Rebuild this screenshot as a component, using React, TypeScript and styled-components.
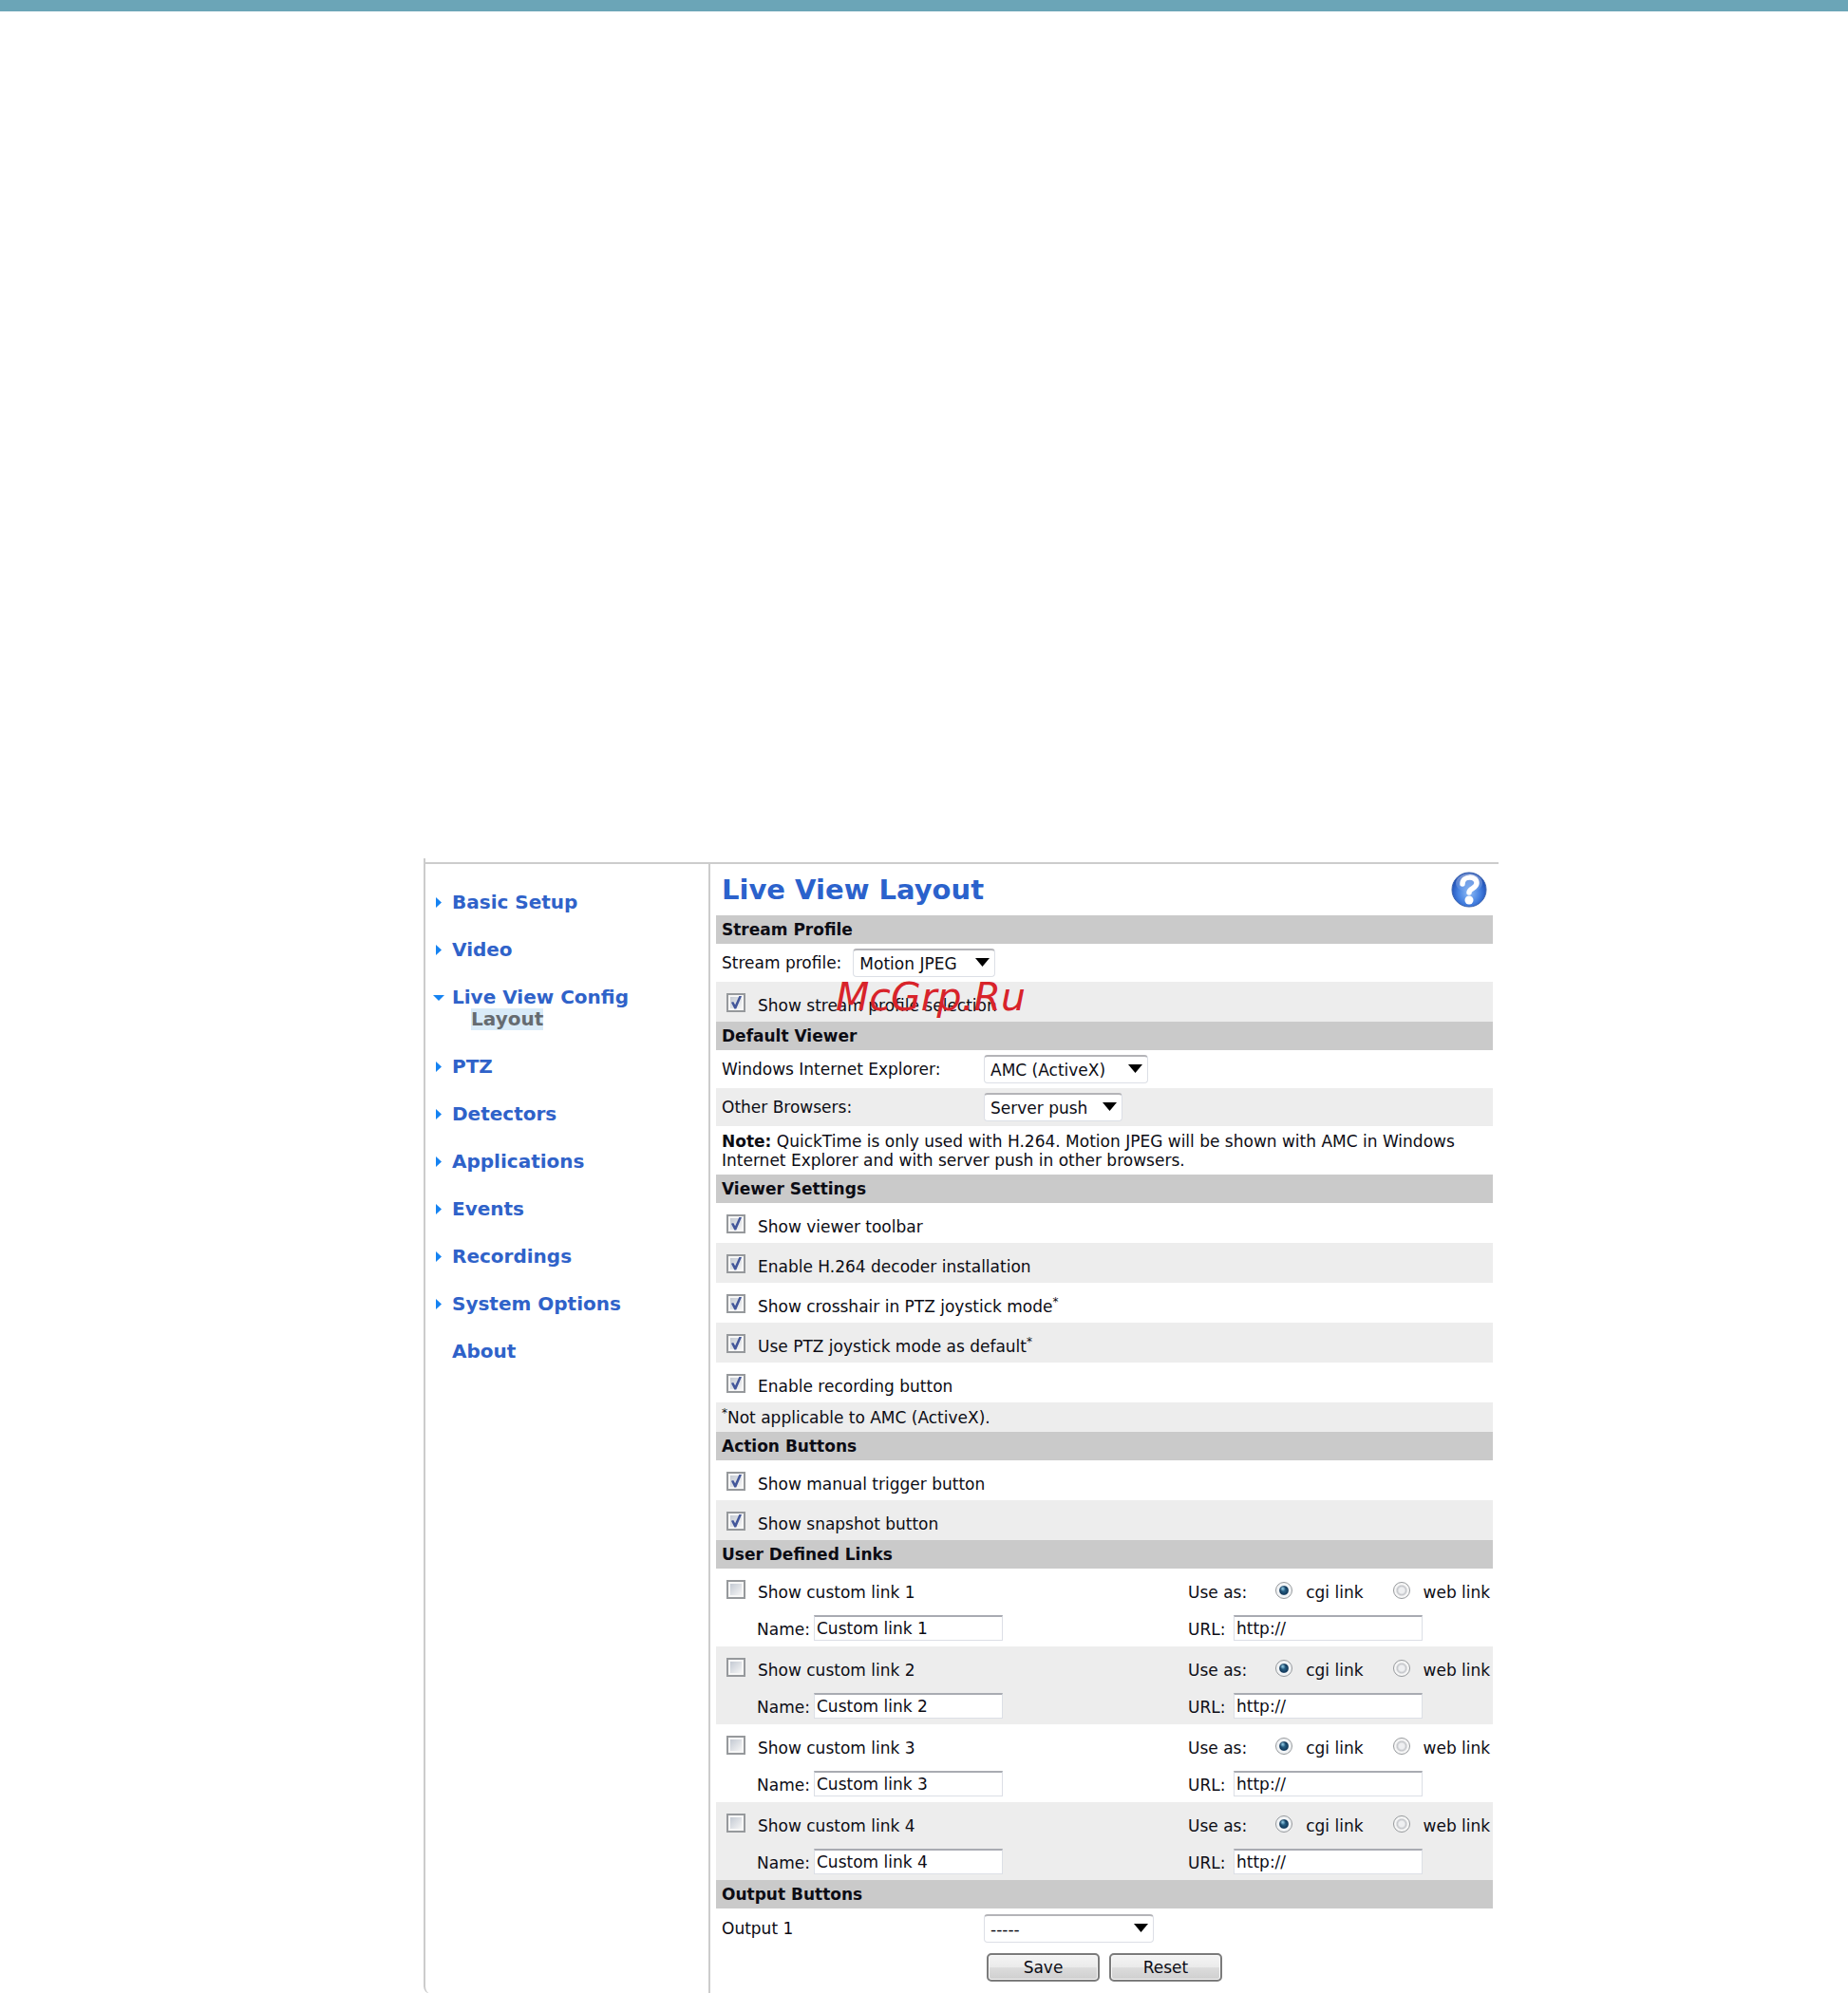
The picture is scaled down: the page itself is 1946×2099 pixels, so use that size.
import React from "react";
import styled, { createGlobalStyle, css } from "styled-components";

const GlobalStyle = createGlobalStyle`
  *, *::before, *::after { box-sizing: border-box; }
  body {
    margin: 0;
    background: #fff;
    color: #0c0c14;
    font: 17px/20px "DejaVu Sans", Verdana, sans-serif;
  }
  input, select, button { font: inherit; color: inherit; }
`;

const TopBar = styled.header`
  height: 12px;
  background: #6ba5b7;
`;

const Page = styled.div`
  display: grid;
  grid-template-columns: minmax(0, 446fr) minmax(900px, 1132fr) minmax(0, 368fr);
  padding-top: 892px;
`;

const Panel = styled.div`
  grid-column: 2;
  display: grid;
  grid-template-columns: 300px minmax(0, 1fr);
  padding-top: 4px;
  border-left: 2px solid #ccc;
  border-bottom-left-radius: 8px;
`;

const Nav = styled.nav`
  padding: 28px 0 0 8px;
  border-top: 2px solid #ccc;
  border-right: 2px solid #ccc;
`;

const NavList = styled.ul`
  display: flex;
  flex-direction: column;
  gap: 26px;
  margin: 0;
  padding: 0;
  list-style: none;
`;

const NavLink = styled.a`
  display: grid;
  grid-template-columns: 20px 1fr;
  align-items: center;
  font-size: 20px;
  line-height: 24px;
  font-weight: bold;
  color: #2f62c9;
  text-decoration: none;
`;

const SubLink = styled.a`
  display: table;
  margin-left: 40px;
  background: #d9ebf8;
  font-size: 20px;
  line-height: 23px;
  font-weight: bold;
  color: #666b70;
  text-decoration: none;
`;

const Main = styled.main`
  padding: 0 6px 13px;
  border-top: 2px solid #ccc;
`;

const TitleRow = styled.div`
  display: flex;
  align-items: center;
  justify-content: space-between;
  height: 54px;
  padding: 0 6px;
`;

const Title = styled.h1`
  margin: 0;
  font-size: 29px;
  line-height: 36px;
  color: #2b62cc;
`;

const HelpButton = styled.button`
  display: flex;
  padding: 0;
  border: 0;
  background: none;
`;

const Heading = styled.h2`
  margin: 0;
  padding: 5px 6px;
  background: #cacaca;
  font-size: 17px;
  line-height: 20px;
`;

const shade = css<{ $shaded?: boolean }>`
  background: ${(p) => (p.$shaded ? "#ededed" : "transparent")};
`;

const SelectRow = styled.div<{ $shaded?: boolean; $inline?: boolean }>`
  ${shade}
  display: grid;
  grid-template-columns: ${(p) => (p.$inline ? "auto" : "276px")} auto;
  justify-content: start;
  align-items: center;
  column-gap: ${(p) => (p.$inline ? "12px" : "0")};
  height: 40px;
  padding: 0 6px;
`;

const CheckRow = styled.div<{ $shaded?: boolean }>`
  ${shade}
  display: flex;
  align-items: center;
  gap: 13px;
  height: 42px;
  padding: 8px 11px 0;
`;

const Note = styled.p<{ $shaded?: boolean }>`
  ${shade}
  margin: 0;
  padding: 6px 6px 5px;
`;

const Sup = styled.sup`
  font-size: 12px;
  line-height: 0;
`;

const SelectBox = styled.div`
  display: grid;
  align-items: center;
  justify-items: end;
  & > * { grid-area: 1 / 1; }
  & > svg { margin-right: 6px; pointer-events: none; }
`;

const Select = styled.select<{ $width: number }>`
  appearance: none;
  width: ${(p) => p.$width}px;
  height: 30px;
  padding: 0 6px;
  border: 1px solid #dcdfe6;
  border-top: 2px solid #b4b4b8;
  border-radius: 4px;
  background: #fff;
`;

const Check = styled.input`
  appearance: none;
  flex: none;
  display: grid;
  place-items: center;
  width: 20px;
  height: 20px;
  margin: 0 0 6px;
  border: 2px solid #96999c;
  background: linear-gradient(135deg, #c3c9d2, #f6f6f6) center / 12px 12px no-repeat #f7f7f7;
  &:checked::after {
    content: "";
    width: 12px;
    height: 14px;
    background: #43579b;
    clip-path: polygon(8% 48%, 27% 42%, 43% 66%, 78% 0, 100% 0, 52% 96%, 36% 96%);
  }
`;

const Radio = styled.input`
  appearance: none;
  flex: none;
  width: 18px;
  height: 18px;
  margin: 0 0 4px;
  border: 1px solid #96999c;
  border-radius: 50%;
  background: radial-gradient(circle at center, #eeeff1 0 25%, #c4c6ca 42%, #f7f7f7 56%);
  &:checked {
    background:
      radial-gradient(circle at 42% 38%, #9ad4ee 0, #9ad4ee00 22%),
      radial-gradient(circle at center, #2d6b91 0, #123a5c 38%, #f2f4f6 48%);
  }
`;

const LinkRow = styled.fieldset<{ $shaded?: boolean }>`
  ${shade}
  display: grid;
  grid-template-columns: minmax(0, 1fr) 321px;
  height: 82px;
  margin: 0;
  padding: 8px 0 0 11px;
  border: 0;
`;

const Column = styled.div`
  display: flex;
  flex-direction: column;
  gap: 5px;
`;

const Line = styled.div<{ $indent?: boolean }>`
  display: flex;
  align-items: center;
  height: 34px;
  padding-left: ${(p) => (p.$indent ? "32px" : "0")};
`;

const CheckLine = styled(Line)`
  gap: 13px;
`;

const Options = styled.div`
  display: flex;
  gap: 31px;
  margin-left: 30px;
`;

const Option = styled.div`
  display: flex;
  align-items: center;
  gap: 14px;
  white-space: nowrap;
`;

const FieldLabel = styled.label<{ $width: number }>`
  width: ${(p) => p.$width}px;
`;

const TextBox = styled.input`
  width: 199px;
  height: 27px;
  margin-bottom: 4px;
  padding: 0 2px;
  border: 1px solid #dcdfe6;
  border-top: 2px solid #a9abb2;
  background: #fff;
`;

const OutputRow = styled(SelectRow)`
  height: 42px;
`;

const Actions = styled.div`
  display: flex;
  gap: 10px;
  padding: 5px 0 0 285px;
`;

const Button = styled.button`
  width: 119px;
  height: 30px;
  padding: 0;
  border: 2px solid #7b7b7b;
  border-radius: 5px;
  background: linear-gradient(#f4f4f4, #ebebeb 48%, #dcdcdc 52%, #cfcfcf);
  box-shadow: inset 0 0 0 1px #fafafa;
`;

const Stage = styled.div`
  position: relative;
`;

const Watermark = styled.div`
  position: absolute;
  top: -50px;
  left: 126px;
  font-size: 41px;
  line-height: 48px;
  font-style: italic;
  color: #d8232a;
  pointer-events: none;
`;

const Marker = ({ open }: { open?: boolean }) => (
  <svg width="12" height="12" viewBox="0 0 12 12" aria-hidden="true">
    <path d={open ? "M0 4h12L6 10z" : "M3 1v11l6-5.500z"} fill="#1583f2" />
  </svg>
);

const HelpIcon = () => (
  <svg width="38" height="38" viewBox="0 0 38 38" aria-hidden="true">
    <defs>
      <radialGradient id="ball" cx="50%" cy="60%" r="55%">
        <stop offset="0" stopColor="#8fbcf6" />
        <stop offset=".6" stopColor="#4480e0" />
        <stop offset="1" stopColor="#1d4db4" />
      </radialGradient>
      <linearGradient id="gloss" x1="0" y1="0" x2="0" y2="1">
        <stop offset="0" stopColor="#fff" stopOpacity=".45" />
        <stop offset="1" stopColor="#fff" stopOpacity="0" />
      </linearGradient>
    </defs>
    <circle cx="19" cy="19" r="18" fill="url(#ball)" stroke="#3e66b0" />
    <ellipse cx="19" cy="12" rx="14" ry="10" fill="url(#gloss)" />
    <path d="M12 13c0-9 15-9 15-1 0 6-8 5-8 10" fill="none" stroke="#fff" strokeWidth="5.500" strokeLinecap="round" />
    <circle cx="19" cy="30" r="4.500" fill="#fff" />
  </svg>
);

interface DropProps {
  id: string;
  width: number;
  value: string;
}

const Drop = ({ id, width, value }: DropProps) => (
  <SelectBox>
    <Select id={id} $width={width} defaultValue={value}>
      <option>{value}</option>
    </Select>
    <svg width="15" height="10" viewBox="0 0 15 10" aria-hidden="true">
      <path d="M0 0h15L7.500 9z" fill="#000" />
    </svg>
  </SelectBox>
);

interface CheckItemProps {
  id: string;
  shaded?: boolean;
  children: React.ReactNode;
}

const CheckItem = ({ id, shaded, children }: CheckItemProps) => (
  <CheckRow $shaded={shaded}>
    <Check type="checkbox" id={id} defaultChecked />
    <label htmlFor={id}>{children}</label>
  </CheckRow>
);

const CustomLink = ({ n }: { n: number }) => (
  <LinkRow $shaded={n % 2 === 0}>
    <Column>
      <CheckLine>
        <Check type="checkbox" id={`show${n}`} />
        <label htmlFor={`show${n}`}>Show custom link {n}</label>
      </CheckLine>
      <Line $indent>
        <FieldLabel htmlFor={`name${n}`} $width={60}>Name:</FieldLabel>
        <TextBox id={`name${n}`} defaultValue={`Custom link ${n}`} />
      </Line>
    </Column>
    <Column>
      <Line>
        Use as:
        <Options>
          <Option>
            <Radio type="radio" id={`cgi${n}`} name={`use${n}`} defaultChecked />
            <label htmlFor={`cgi${n}`}>cgi link</label>
          </Option>
          <Option>
            <Radio type="radio" id={`web${n}`} name={`use${n}`} />
            <label htmlFor={`web${n}`}>web link</label>
          </Option>
        </Options>
      </Line>
      <Line>
        <FieldLabel htmlFor={`url${n}`} $width={48}>URL:</FieldLabel>
        <TextBox id={`url${n}`} defaultValue="http://" />
      </Line>
    </Column>
  </LinkRow>
);

const NAV = [
  "Basic Setup", "Video", "Live View Config", "PTZ", "Detectors",
  "Applications", "Events", "Recordings", "System Options", "About",
];

export default function App() {
  return (
    <>
      <GlobalStyle />
      <TopBar />
      <Page>
        <Panel>
          <Nav>
            <NavList>
              {NAV.map((name) => {
                const open = name === "Live View Config";
                return (
                  <li key={name}>
                    <NavLink href="#">
                      {name === "About" ? <span /> : <Marker open={open} />}
                      {name}
                    </NavLink>
                    {open && <SubLink href="#">Layout</SubLink>}
                  </li>
                );
              })}
            </NavList>
          </Nav>
          <Main>
            <TitleRow>
              <Title>Live View Layout</Title>
              <HelpButton type="button" aria-label="Help"><HelpIcon /></HelpButton>
            </TitleRow>

            <Heading>Stream Profile</Heading>
            <SelectRow $inline>
              <label htmlFor="profile">Stream profile:</label>
              <Drop id="profile" width={150} value="Motion JPEG" />
            </SelectRow>
            <CheckItem id="selection" shaded>Show stream profile selection</CheckItem>
            <Stage><Watermark>McGrp.Ru</Watermark></Stage>

            <Heading>Default Viewer</Heading>
            <SelectRow>
              <label htmlFor="ie">Windows Internet Explorer:</label>
              <Drop id="ie" width={173} value="AMC (ActiveX)" />
            </SelectRow>
            <SelectRow $shaded>
              <label htmlFor="other">Other Browsers:</label>
              <Drop id="other" width={146} value="Server push" />
            </SelectRow>
            <Note>
              <b>Note:</b> QuickTime is only used with H.264. Motion JPEG will be shown with AMC in
              Windows Internet Explorer and with server push in other browsers.
            </Note>

            <Heading>Viewer Settings</Heading>
            <CheckItem id="toolbar">Show viewer toolbar</CheckItem>
            <CheckItem id="decoder" shaded>Enable H.264 decoder installation</CheckItem>
            <CheckItem id="crosshair">Show crosshair in PTZ joystick mode<Sup>*</Sup></CheckItem>
            <CheckItem id="joystick" shaded>Use PTZ joystick mode as default<Sup>*</Sup></CheckItem>
            <CheckItem id="recording">Enable recording button</CheckItem>
            <Note $shaded><Sup>*</Sup>Not applicable to AMC (ActiveX).</Note>

            <Heading>Action Buttons</Heading>
            <CheckItem id="trigger">Show manual trigger button</CheckItem>
            <CheckItem id="snapshot" shaded>Show snapshot button</CheckItem>

            <Heading>User Defined Links</Heading>
            {[1, 2, 3, 4].map((n) => <CustomLink key={n} n={n} />)}

            <Heading>Output Buttons</Heading>
            <OutputRow>
              <label htmlFor="output">Output 1</label>
              <Drop id="output" width={179} value="-----" />
            </OutputRow>
            <Actions>
              <Button type="button">Save</Button>
              <Button type="reset">Reset</Button>
            </Actions>
          </Main>
        </Panel>
      </Page>
    </>
  );
}
